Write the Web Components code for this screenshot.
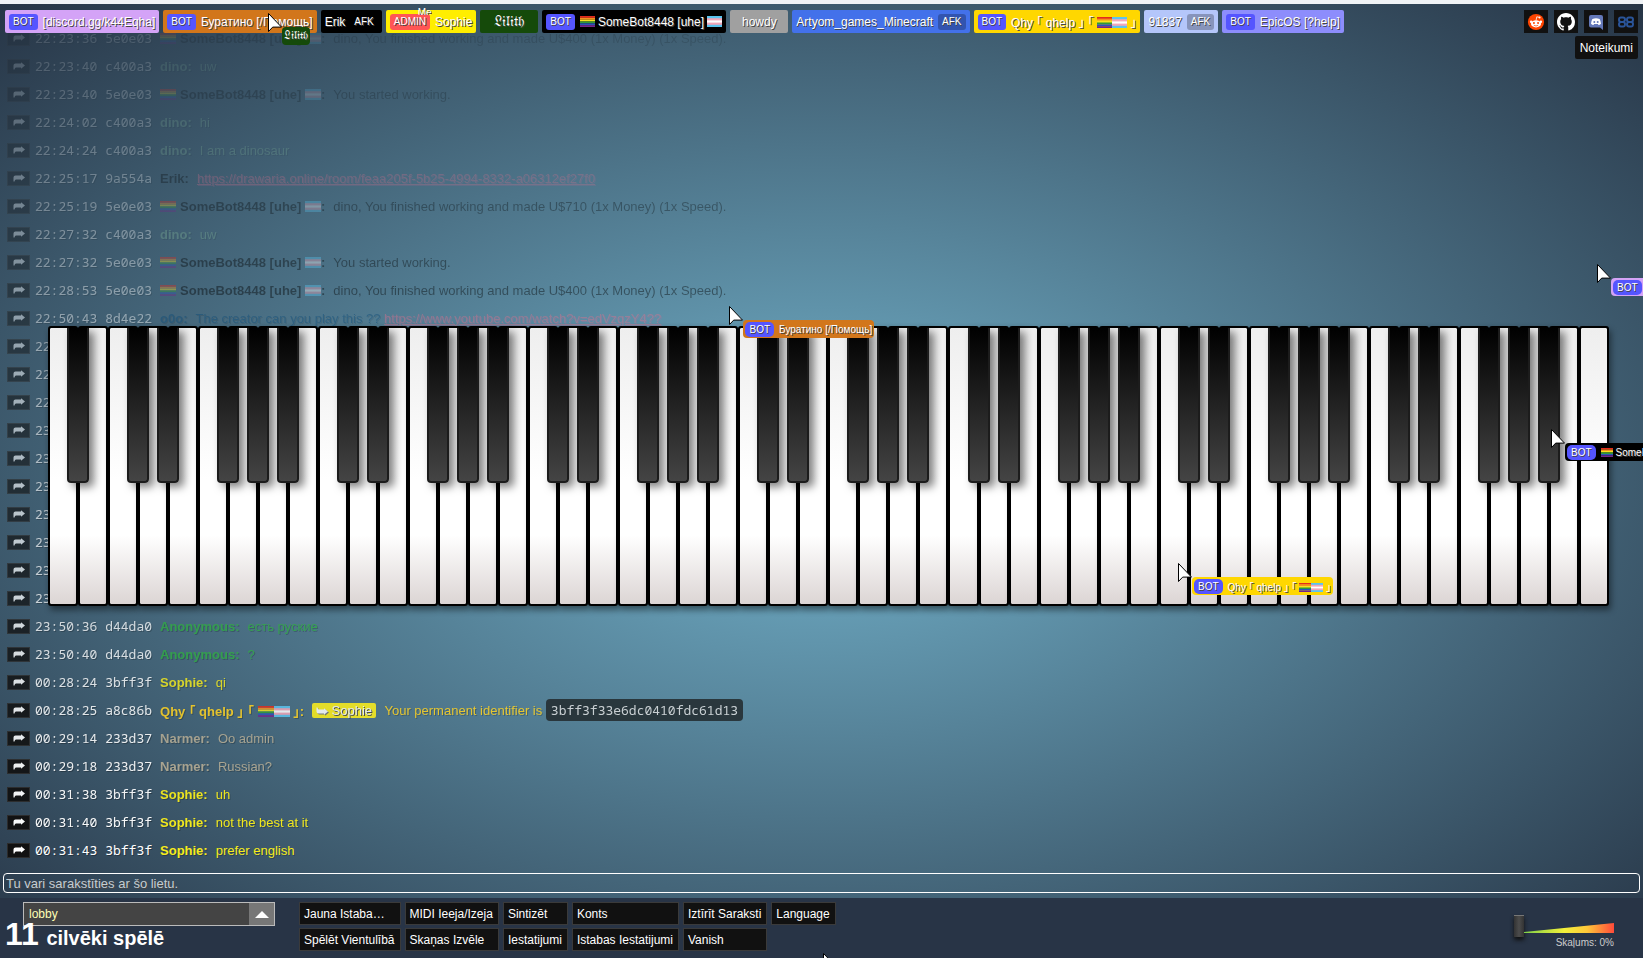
<!DOCTYPE html>
<html lang="lv">
<head>
<meta charset="utf-8">
<title>lobby</title>
<style>
    html {
        height: 100%;
        background: #f0f3f6;
    }
    body {
        margin: 0;
        height: 100%;
        overflow: hidden;
        font-family: "Liberation Sans", "Noto Sans CJK JP", sans-serif;
        font-size: 12px;
        color: #fff;
    }
</style>
</head>
<body>
<piano-app></piano-app>

<script>
const rainbow = `<svg class="flag rainbow" viewBox="0 0 16 12" preserveAspectRatio="none" aria-hidden="true">
    <path fill="#e32b1d" d="M0 0h16v2H0z"/><path fill="#f5901f" d="M0 2h16v2H0z"/>
    <path fill="#f6e21f" d="M0 4h16v2H0z"/><path fill="#2d9a3c" d="M0 6h16v2H0z"/>
    <path fill="#2b54b8" d="M0 8h16v2H0z"/><path fill="#74258a" d="M0 10h16v2H0z"/></svg>`;
const trans = `<svg class="flag" viewBox="0 0 15 10" preserveAspectRatio="none" aria-hidden="true">
    <path fill="#5bc4ee" d="M0 0h15v10H0z"/><path fill="#f3a6b8" d="M0 2h15v6H0z"/>
    <path fill="#fff" d="M0 4h15v2H0z"/></svg>`;
const arrow = `<svg class="arrow" viewBox="0 0 12 8" aria-hidden="true">
    <path fill="currentColor" d="M.5 7.500V3.500Q.5 1.500 2.500 1.500H8V.3l4 3.200-4 3.200V5.500H3Q1.800 5.500 1.500 7.500z"/></svg>`;

const someBot = `${rainbow}<span class="gap"></span>SomeBot8448 [uhe] ${trans}`;
const qhy = `Qhy ｢ qhelp ｣ ｢ ${rainbow}${trans} ｣`;
const lilith = '<span class="fraktur">𝔏𝔦𝔩𝔦𝔱𝔥</span>';

const users = [
    {tag: 'BOT', name: '[discord.gg/k44Eqha]', color: '#d4a3f7'},
    {tag: 'BOT', name: 'Буратино [/Помощь]', color: '#d2761b'},
    {name: 'Erik', afk: true, color: '#000'},
    {tag: 'ADMIN', name: 'Sophie', color: '#ffee00', me: true},
    {name: lilith, color: '#154a0a'},
    {tag: 'BOT', name: someBot, color: '#000'},
    {name: 'howdy', color: '#a0a0a0'},
    {name: 'Artyom_games_Minecraft', afk: true, color: '#4371ea'},
    {tag: 'BOT', name: qhy, color: '#ffd700'},
    {name: '91837', afk: true, color: '#b4c6fa'},
    {tag: 'BOT', name: 'EpicOS [?help]', color: '#8d8dfc'}
];

const cursors = [
    {x: 16.3, y: 0.9, name: lilith, color: '#154a0a'},
    {x: 44.4, y: 31.7, tag: 'BOT', name: 'Буратино [/Помощь]', color: '#d2761b'},
    {x: 71.7, y: 58.6, tag: 'BOT', name: qhy, color: '#ffd700'},
    {x: 97.2, y: 27.3, tag: 'BOT', name: '[discord.gg/k44Eqha]', color: '#d4a3f7'},
    {x: 94.4, y: 44.6, tag: 'BOT', name: someBot, color: '#000'},
    {x: 50.1, y: 99.5}
];

const dino = {id: 'c400a3', name: 'dino', color: '#7fb296', shadow: true};
const bot = {id: '5e0e03', name: someBot, color: '#000'};
const anon = {id: 'd44da0', name: 'Anonymous', color: '#2fae41', shadow: true};
const sophie = {id: '3bff3f', name: 'Sophie', color: '#f6ec1c', shadow: true};
const narmer = {id: '233d37', name: 'Narmer', color: '#b3ab94', shadow: true};

const messages = [
    {time: '22:23:36', ...bot, text: 'dino, You finished working and made U$400 (1x Money) (1x Speed).'},
    {time: '22:23:40', ...dino, text: 'uw'},
    {time: '22:23:40', ...bot, text: 'You started working.'},
    {time: '22:24:02', ...dino, text: 'hi'},
    {time: '22:24:24', ...dino, text: 'I am a dinosaur'},
    {time: '22:25:17', id: '9a554a', name: 'Erik', color: '#000', text: '<a href="#">https://drawaria.online/room/feaa205f-5b25-4994-8332-a06312ef27f0</a>'},
    {time: '22:25:19', ...bot, text: 'dino, You finished working and made U$710 (1x Money) (1x Speed).'},
    {time: '22:27:32', ...dino, text: 'uw'},
    {time: '22:27:32', ...bot, text: 'You started working.'},
    {time: '22:28:53', ...bot, text: 'dino, You finished working and made U$400 (1x Money) (1x Speed).'},
    {time: '22:50:43', id: '8d4e22', name: 'o0o', color: '#0a4a78', shadow: true, text: 'The creator can you play this ?? <a href="#">https://www.youtube.com/watch?v=edVzqzY4??</a>'},
    {time: '22'}, {time: '22'}, {time: '22'},
    {time: '23'}, {time: '23'}, {time: '23'}, {time: '23'}, {time: '23'}, {time: '23'}, {time: '23'},
    {time: '23:50:36', ...anon, text: 'есть руские'},
    {time: '23:50:40', ...anon, text: '?'},
    {time: '00:28:24', ...sophie, text: 'qi'},
    {time: '00:28:25', id: 'a8c86b', name: qhy, color: '#ffd321', shadow: true, text: `<span class="ping">${arrow} Sophie</span> Your permanent identifier is <code>3bff3f33e6dc0410fdc61d13</code>`},
    {time: '00:29:14', ...narmer, text: 'Oo admin'},
    {time: '00:29:18', ...narmer, text: 'Russian?'},
    {time: '00:31:38', ...sophie, text: 'uh'},
    {time: '00:31:40', ...sophie, text: 'not the best at it'},
    {time: '00:31:43', ...sophie, text: 'prefer english'}
];

// name plate, used in the top list and beside the cursors
class UserName extends HTMLElement {
    constructor() {
        super();
        this.shadowDOM = this.attachShadow({mode: 'open'});
    }

    set user(user) {
        this.shadowDOM.innerHTML = `
            <style>
                :host {
                    display: flex;
                    position: relative;
                    align-items: center;
                    justify-content: center;
                    gap: 5px;
                    box-sizing: border-box;
                    min-width: 58px;
                    height: 23px;
                    padding: 0 4px;
                    border-radius: 2px;
                    white-space: nowrap;
                    text-shadow: 1px 1px #444;
                }
                :host([small]) {
                    min-width: 0;
                    height: 18px;
                    padding: 0 2px;
                    gap: 5px;
                    border-radius: 4px;
                    font-size: 10px;
                }
                .tag {
                    padding: 0 4px;
                    border-radius: 3px;
                    background: #5555ff;
                    font-size: 10px;
                    line-height: 16px;
                }
                :host([small]) .tag {
                    border-radius: 5px;
                    line-height: 15px;
                }
                .admin { background: #ff5555; }
                .afk { background: rgba(0,0,0,0.25); }
                .fraktur { font-size: 14px; }
                :host([small]) .fraktur { font-size: 11px; }
                .flag {
                    width: 15px;
                    height: 11px;
                    vertical-align: -1px;
                }
                .gap { margin-right: 3px; }
                :host([small]) .flag { width: 12px; height: 9px; }
                .me {
                    position: absolute;
                    top: -2px;
                    left: 32px;
                    height: 7px;
                    overflow: hidden;
                    font-size: 10px;
                    line-height: 10px;
                }
            </style>
            ${user.tag ? `<span class="tag ${user.tag.toLowerCase()}">${user.tag}</span>` : ''}
            <span>${user.name}</span>
            ${user.afk ? '<span class="tag afk">AFK</span>' : ''}
            ${user.me ? '<span class="me">Me</span>' : ''}
        `;
        this.style.background = user.color;
    }
}
customElements.define('user-name', UserName);

class UserList extends HTMLElement {
    connectedCallback() {
        const shadowDOM = this.attachShadow({mode: 'open'});
        shadowDOM.innerHTML = `
            <style>
                :host {
                    display: flex;
                    flex-wrap: wrap;
                    gap: 4px;
                }
            </style>
        `;
        users.forEach(user => {
            const item = document.createElement('user-name');
            item.user = user;
            shadowDOM.appendChild(item);
        });
    }
}
customElements.define('user-list', UserList);

class SiteLinks extends HTMLElement {
    connectedCallback() {
        this.attachShadow({mode: 'open'}).innerHTML = `
            <style>
                :host {
                    display: grid;
                    justify-items: end;
                    gap: 3px;
                }
                nav {
                    display: flex;
                    gap: 6px;
                }
                a {
                    display: flex;
                    align-items: center;
                    justify-content: center;
                    box-sizing: border-box;
                    width: 24px;
                    height: 23px;
                    background: #111;
                    color: #fff;
                    text-decoration: none;
                }
                svg { width: 18px; height: 18px; }
                .rules {
                    width: auto;
                    padding: 0 5px;
                    border-radius: 2px;
                }
            </style>
            <nav>
                <a href="#" aria-label="Reddit"><svg viewBox="0 0 20 20">
                    <circle cx="10" cy="10" r="9" fill="#ff4500"/>
                    <ellipse cx="10" cy="12" rx="5.6" ry="4" fill="#fff"/>
                    <circle cx="4.6" cy="9.8" r="1.4" fill="#fff"/><circle cx="15.4" cy="9.8" r="1.4" fill="#fff"/>
                    <path d="M10 8.2l.9-4 2.7.6" fill="none" stroke="#fff" stroke-width=".9"/>
                    <circle cx="14" cy="4.9" r="1.1" fill="#fff"/>
                    <circle cx="7.7" cy="11" r="1.1" fill="#ff4500"/><circle cx="12.3" cy="11" r="1.1" fill="#ff4500"/>
                    <path d="M7.6 13.6q2.4 1.7 4.8 0" fill="none" stroke="#ff4500" stroke-width=".8"/></svg></a>
                <a href="#" aria-label="GitHub"><svg viewBox="0 0 16 16"><path fill="#fff" d="M8 0C3.58 0 0 3.58 0 8c0 3.54 2.29 6.53 5.47 7.59.4.07.55-.17.55-.38 0-.19-.01-.82-.01-1.49-2.01.37-2.53-.49-2.69-.94-.09-.23-.48-.94-.82-1.13-.28-.15-.68-.52-.01-.53.63-.01 1.08.58 1.23.82.72 1.21 1.87.87 2.33.66.07-.52.28-.87.51-1.07-1.78-.2-3.64-.89-3.64-3.95 0-.87.31-1.59.82-2.15-.08-.2-.36-1.02.08-2.12 0 0 .67-.21 2.2.82.64-.18 1.32-.27 2-.27s1.36.09 2 .27c1.53-1.04 2.2-.82 2.2-.82.44 1.1.16 1.92.08 2.12.51.56.82 1.27.82 2.15 0 3.07-1.87 3.75-3.65 3.95.29.25.54.73.54 1.48 0 1.07-.01 1.93-.01 2.2 0 .21.15.46.55.38A8.01 8.01 0 0 0 16 8c0-4.42-3.58-8-8-8z"/></svg></a>
                <a href="#" aria-label="Discord"><svg viewBox="0 0 18 18">
                    <path fill="#6478b8" d="M4 2h10a2 2 0 0 1 2 2v13l-3-2.4H4a2 2 0 0 1-2-2V4a2 2 0 0 1 2-2z"/>
                    <path fill="#fff" d="M5.4 6q3.6-1.6 7.2 0 1.400 2.500 1.400 4.800-1.200 1.200-2.500 1.200l-.6-.9H7.100l-.6.9q-1.300 0-2.500-1.200Q4 8.500 5.400 6z"/>
                    <circle cx="7.3" cy="8.9" r="1" fill="#6478b8"/><circle cx="10.700" cy="8.9" r="1" fill="#6478b8"/></svg></a>
                <a href="#" aria-label="BB"><svg viewBox="0 0 18 18" fill="none" stroke="#2a5498" stroke-width="2">
                    <path d="M4 4.500h2q2 0 2 2T6 9H4Q2 9 2 6.700T4 4.500zM4 9h2q2 0 2 2.300t-2 2.200H4q-2 0-2-2.200T4 9zM12 4.500h2q2 0 2 2.200T14 9h-2q-2 0-2-2.300t2-2.200zM12 9h2q2 0 2 2.300t-2 2.200h-2q-2 0-2-2.200T12 9z"/></svg></a>
            </nav>
            <a class="rules" href="#">Noteikumi</a>
        `;
    }
}
customElements.define('site-links', SiteLinks);

class ChatMessage extends HTMLElement {
    constructor() {
        super();
        this.shadowDOM = this.attachShadow({mode: 'open'});
    }

    set message(message) {
        this.shadowDOM.innerHTML = `
            <style>
                :host {
                    display: flex;
                    align-items: center;
                    height: 28px;
                    padding-left: 7px;
                    white-space: pre;
                    font-size: 13px;
                }
                button {
                    display: flex;
                    align-items: center;
                    justify-content: center;
                    width: 23px;
                    height: 15px;
                    margin: 0 5px 0 0;
                    padding: 0;
                    border: 1px solid #2c2c2c;
                    background: #111;
                    color: #fff;
                }
                .arrow { width: 12px; height: 8px; }
                .stamp, code {
                    font-family: "Noto Sans Mono", "DejaVu Sans Mono", monospace;
                    font-size: 13px;
                }
                .stamp { text-shadow: 1px 1px rgba(0,0,0,0.3); }
                .name {
                    margin: 0 8px;
                    font-weight: bold;
                }
                .shadow { text-shadow: 1px 1px rgba(0,0,0,0.25); }
                a {
                    color: #e0708c;
                    text-shadow: 1px 1px rgba(200,100,150,0.6);
                }
                .flag {
                    width: 16px;
                    height: 11px;
                    vertical-align: -1px;
                }
                .gap { margin-right: 4px; }
                .ping {
                    display: inline-block;
                    margin-right: 5px;
                    padding: 0 4px;
                    border-radius: 2px;
                    background: #fff01a;
                    color: #fff;
                    line-height: 15px;
                    text-shadow: 1px 1px #444;
                }
                .ping .arrow {
                    transform: scaleY(-1);
                    filter: drop-shadow(1px -1px #777);
                }
                code {
                    display: inline-block;
                    padding: 0 5px;
                    border-radius: 4px;
                    background: #222a2d;
                    color: #ddd;
                    line-height: 22px;
                    text-shadow: none;
                }
            </style>
            <button aria-label="Atbildēt">${arrow}</button>
            <span class="stamp">${message.time}${message.id ? ' ' + message.id : ''}</span>
            ${message.name ? `<span class="name">${message.name}:</span><span class="text">${message.text}</span>` : ''}
        `;
        this.shadowDOM.querySelectorAll('.name, .text').forEach(part => {
            part.style.color = message.color;
            part.classList.toggle('shadow', Boolean(message.shadow));
        });
    }
}
customElements.define('chat-message', ChatMessage);

class ChatLog extends HTMLElement {
    connectedCallback() {
        const shadowDOM = this.attachShadow({mode: 'open'});
        shadowDOM.innerHTML = `
            <style>
                :host { display: block; }
            </style>
        `;
        messages.forEach((message, i) => {
            const item = document.createElement('chat-message');
            item.message = message;
            // older lines fade out
            item.style.opacity = 1 - (messages.length - 1 - i) * 0.03;
            shadowDOM.appendChild(item);
        });
    }
}
customElements.define('chat-log', ChatLog);

class PianoKeys extends HTMLElement {
    connectedCallback() {
        const shadowDOM = this.attachShadow({mode: 'open'});
        shadowDOM.innerHTML = `
            <style>
                :host {
                    display: grid;
                    grid-template-columns: repeat(52, 1fr);
                    aspect-ratio: 1560 / 280;
                }
                .white {
                    position: relative;
                    border: 2px solid #000;
                    border-radius: 3px;
                    background: linear-gradient(#eee, #fff 55%, #fff 75%, #dcd5d4) #000;
                    background-clip: padding-box;
                    box-shadow: 2px 4px 6px rgba(0,0,0,0.45);
                }
                .black {
                    position: absolute;
                    top: 0;
                    left: 100%;
                    z-index: 2;
                    box-sizing: border-box;
                    width: 22px;
                    height: 56%;
                    margin-left: -9px;
                    border: 2px solid #1c1c1c;
                    border-top: 0;
                    border-radius: 0 0 4px 4px;
                    background: linear-gradient(#000, #444);
                    box-shadow: 5px 4px 9px rgba(0,0,0,0.5);
                }
            </style>
        `;
        // 88 keys starting from A
        for (let i = 0; i < 52; i++) {
            const key = document.createElement('div');
            key.className = 'white';
            if (i < 51 && [0, 2, 3, 5, 6].includes(i % 7)) {
                key.innerHTML = '<div class="black"></div>';
            }
            shadowDOM.appendChild(key);
        }
    }
}
customElements.define('piano-keys', PianoKeys);

class CursorLayer extends HTMLElement {
    connectedCallback() {
        const shadowDOM = this.attachShadow({mode: 'open'});
        shadowDOM.innerHTML = `
            <style>
                :host {
                    position: absolute;
                    inset: 0;
                    z-index: 5;
                    overflow: hidden;
                    pointer-events: none;
                }
                .cursor { position: absolute; }
                svg {
                    display: block;
                    width: 14px;
                    height: 20px;
                }
                user-name {
                    position: absolute;
                    top: 14px;
                    left: 14px;
                }
            </style>
        `;
        cursors.forEach(cursor => {
            const item = document.createElement('div');
            item.className = 'cursor';
            item.style.left = cursor.x + '%';
            item.style.top = cursor.y + '%';
            item.innerHTML = '<svg viewBox="0 0 14 20"><path fill="#fff" stroke="#000" d="M.5.5v18l4.200-4.400h8.800z"/></svg>';
            if (cursor.name) {
                const label = document.createElement('user-name');
                label.setAttribute('small', '');
                label.user = cursor;
                item.appendChild(label);
            }
            shadowDOM.appendChild(item);
        });
    }
}
customElements.define('cursor-layer', CursorLayer);

class VolumeSlider extends HTMLElement {
    connectedCallback() {
        this.attachShadow({mode: 'open'}).innerHTML = `
            <style>
                :host {
                    display: grid;
                    width: 100px;
                    color: #ccc;
                    text-align: right;
                }
                .track {
                    grid-area: 1 / 1;
                    height: 10px;
                    margin: 9px 0 0 10px;
                    clip-path: polygon(0 90%, 100% 0, 100% 100%, 0 100%);
                    background: linear-gradient(90deg, #7fd048, #f3f03a 45%, #ffc83a 70%, #ff4a3a);
                }
                input {
                    grid-area: 1 / 1;
                    appearance: none;
                    width: 100%;
                    height: 24px;
                    margin: 0;
                    background: none;
                }
                input::-webkit-slider-thumb {
                    appearance: none;
                    width: 10px;
                    height: 22px;
                    border-top: 1px solid #777;
                    background: linear-gradient(90deg, #333, #4c4c4c, #333);
                    box-shadow: 0 3px 4px #111;
                }
                label {
                    margin-top: -2px;
                    font-size: 10px;
                    line-height: 14px;
                }
            </style>
            <div class="track"></div>
            <input id="volume" type="range" min="0" max="100" value="0">
            <label for="volume">Skaļums: 0%</label>
        `;
    }
}
customElements.define('volume-slider', VolumeSlider);

class BottomBar extends HTMLElement {
    connectedCallback() {
        this.attachShadow({mode: 'open'}).innerHTML = `
            <style>
                :host {
                    display: flex;
                    align-items: flex-start;
                    box-sizing: border-box;
                    height: 60px;
                    padding: 4px 29px 0 5px;
                    background: #283446;
                }
                .room { width: 294px; }
                .picker {
                    display: grid;
                    width: 252px;
                    margin-left: 18px;
                }
                select {
                    grid-area: 1 / 1;
                    appearance: none;
                    height: 24px;
                    padding: 0 5px;
                    border: 1px solid #bbb;
                    border-radius: 0;
                    background: linear-gradient(#777, #777) right / 25px 100% no-repeat #444;
                    color: #ffffb4;
                    font: inherit;
                }
                .picker svg {
                    grid-area: 1 / 1;
                    place-self: center end;
                    width: 14px;
                    height: 7px;
                    margin-right: 6px;
                    z-index: 1;
                }
                .count {
                    margin-top: -8px;
                    position: relative;
                    font-size: 20px;
                    line-height: 32px;
                    font-weight: bold;
                }
                .count b {
                    margin-right: 2px;
                    font-size: 32px;
                }
                .buttons {
                    display: grid;
                    grid-template-columns: repeat(6, auto);
                    gap: 3px 4px;
                    margin: 0 auto 0 0;
                }
                button {
                    height: 23px;
                    padding: 0 5px 0 4px;
                    border: 1px solid #3a3a3a;
                    background: #111;
                    color: #fff;
                    font: inherit;
                    text-align: left;
                }
                volume-slider { margin-top: 12px; }
            </style>
            <div class="room">
                <div class="picker">
                    <select aria-label="Istaba"><option>lobby</option></select>
                    <svg viewBox="0 0 14 7"><path fill="#fff" d="M0 7l7-7 7 7z"/></svg>
                </div>
                <div class="count"><b>11</b> cilvēki spēlē</div>
            </div>
            <div class="buttons">
                <button>Jauna Istaba…</button>
                <button>MIDI Ieeja/Izeja</button>
                <button>Sintizēt</button>
                <button>Konts</button>
                <button>Iztīrīt Saraksti</button>
                <button>Language</button>
                <button>Spēlēt Vientulībā</button>
                <button>Skaņas Izvēle</button>
                <button>Iestatijumi</button>
                <button>Istabas Iestatijumi</button>
                <button>Vanish</button>
            </div>
            <volume-slider></volume-slider>
        `;
    }
}
customElements.define('bottom-bar', BottomBar);

class PianoApp extends HTMLElement {
    connectedCallback() {
        this.attachShadow({mode: 'open'}).innerHTML = `
            <style>
                :host {
                    display: flex;
                    flex-direction: column;
                    position: relative;
                    box-sizing: border-box;
                    height: 100%;
                    border-top: 4px solid #f0f3f6;
                    background: radial-gradient(ellipse at center, #73b3cc 0%, #273546 100%);
                }
                /* header, chat and piano share one cell */
                main {
                    flex: 1;
                    display: grid;
                    min-height: 0;
                }
                main > * { grid-area: 1 / 1; }
                header {
                    z-index: 2;
                    align-self: start;
                    display: flex;
                    justify-content: space-between;
                    align-items: flex-start;
                    padding: 6px 5px;
                }
                chat-log {
                    align-self: end;
                    margin-bottom: 9px;
                }
                piano-keys {
                    z-index: 1;
                    align-self: center;
                    width: 95%;
                    margin: 55px 0 0 48px;
                }
                input {
                    box-sizing: border-box;
                    height: 20px;
                    margin: 0 3px 5px;
                    padding: 0 2px;
                    border: 1px solid #fff;
                    border-radius: 4px;
                    background: none;
                    color: #fff;
                    font: inherit;
                    font-size: 13px;
                }
                input::placeholder {
                    color: #c4cdd3;
                    text-shadow: 1px 1px #444;
                }
            </style>
            <main>
                <chat-log></chat-log>
                <piano-keys></piano-keys>
                <header>
                    <user-list></user-list>
                    <site-links></site-links>
                </header>
            </main>
            <input type="text" placeholder="Tu vari sarakstīties ar šo lietu." aria-label="Sarakste">
            <bottom-bar></bottom-bar>
            <cursor-layer></cursor-layer>
        `;
    }
}
customElements.define('piano-app', PianoApp);
</script>
</body>
</html>
